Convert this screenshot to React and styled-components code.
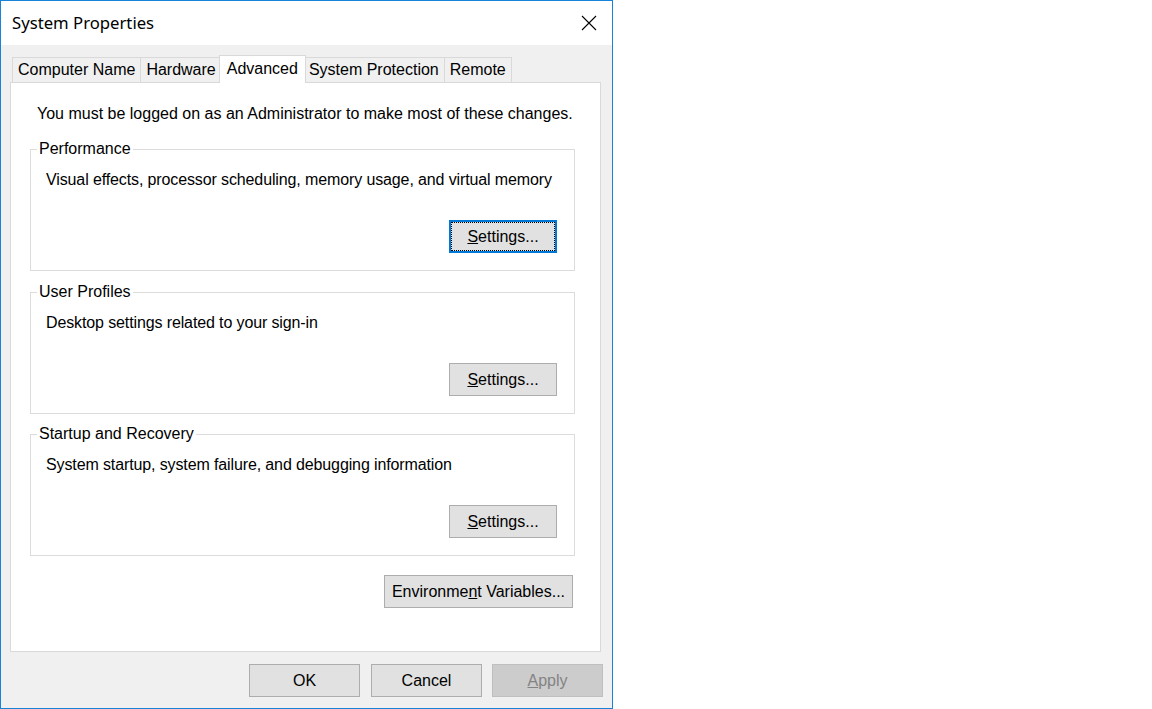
import React from "react";
import styled, { createGlobalStyle, css } from "styled-components";

const GlobalStyle = createGlobalStyle`
  html, body {
    margin: 0;
    padding: 0;
    background: #ffffff;
  }
  * {
    box-sizing: border-box;
  }
`;

const Window = styled.div`
  width: 613px;
  height: 709px;
  border: 1px solid #1883d7;
  display: flex;
  flex-direction: column;
  font-family: "Liberation Sans", Arial, sans-serif;
  font-size: 16px;
  color: #000;
`;

const TitleBar = styled.div`
  height: 44px;
  background: #ffffff;
  display: flex;
  align-items: center;
  justify-content: space-between;
  padding-left: 11px;
`;

const Title = styled.span`
  font-family: "Noto Sans", sans-serif;
  font-size: 16.7px;
  line-height: 20px;
`;

const CloseBox = styled.div`
  width: 46px;
  height: 44px;
  display: flex;
  align-items: center;
  justify-content: center;
`;

const Body = styled.div`
  flex: 1;
  background: #f0f0f0;
  padding: 10px 9px 11px 9px;
  display: flex;
  flex-direction: column;
`;

const TabStrip = styled.div`
  height: 27px;
  display: flex;
  align-items: flex-end;
  padding-left: 2px;
`;

const Tab = styled.div`
  height: 25px;
  display: flex;
  align-items: center;
  padding: 0 5px;
  margin-left: -1px;
  border: 1px solid #d9d9d9;
  border-bottom: none;
  background: #f0f0f0;
  line-height: 18px;
  white-space: nowrap;
  &:first-child {
    margin-left: 0;
  }
  ${(p) =>
    p.$active &&
    css`
      position: relative;
      z-index: 1;
      height: 28px;
      margin: 0 -2px -1px -3px;
      padding: 0 7px 2px 7px;
      background: #ffffff;
    `}
`;

const Panel = styled.div`
  height: 570px;
  margin-right: 2px;
  border: 1px solid #d9d9d9;
  background: #ffffff;
  padding: 0 25px 0 19px;
  display: flex;
  flex-direction: column;
`;

const Notice = styled.p`
  margin: 22px 0 0 7px;
  line-height: 18px;
`;

const Group = styled.fieldset`
  min-width: 0;
  margin: ${(p) => p.$gap}px 0 0 0;
  padding: 0 17px 17px 0;
  border: 1px solid #dcdcdc;
  display: flex;
  flex-direction: column;
`;

const Legend = styled.legend`
  margin-left: 6px;
  padding: 0 2px;
  line-height: 18px;
`;

const Description = styled.p`
  margin: 13px 0 0 15px;
  line-height: 18px;
  white-space: nowrap;
  letter-spacing: -0.12px;
`;

const Button = styled.button`
  height: 33px;
  width: ${(p) => p.$width}px;
  border: 1px solid #adadad;
  background: #e1e1e1;
  font-family: "Liberation Sans", Arial, sans-serif;
  font-size: 16px;
  color: #000;
  padding: 0;
  align-self: flex-end;
  ${(p) =>
    p.$focused &&
    css`
      border: 2px solid #0078d7;
      outline: 1px dotted #000;
      outline-offset: -3px;
    `}
  ${(p) =>
    p.disabled &&
    css`
      background: #cccccc;
      border-color: #bfbfbf;
      color: #838383;
    `}
`;

const GroupButton = styled(Button)`
  margin-top: 31px;
`;

const EnvButton = styled(Button)`
  margin: 19px 2px 0 0;
`;

const ButtonRow = styled.div`
  display: flex;
  justify-content: flex-end;
  gap: 10px;
  margin-top: 12px;
  & > :first-child {
    margin-right: 1px;
  }
`;

const groups = [
  {
    title: "Performance",
    text: "Visual effects, processor scheduling, memory usage, and virtual memory",
    focused: true,
    gap: 17,
  },
  { title: "User Profiles", text: "Desktop settings related to your sign-in", gap: 12 },
  {
    title: "Startup and Recovery",
    text: "System startup, system failure, and debugging information",
    gap: 11,
  },
];

const tabs = ["Computer Name", "Hardware", "Advanced", "System Protection", "Remote"];

function CloseIcon() {
  return (
    <svg width="16" height="16" viewBox="0 0 16 16">
      <path d="M1 1 L15 15 M15 1 L1 15" stroke="#000" strokeWidth="1.1" fill="none" />
    </svg>
  );
}

export default function App() {
  return (
    <>
      <GlobalStyle />
      <Window>
        <TitleBar>
          <Title>System Properties</Title>
          <CloseBox>
            <CloseIcon />
          </CloseBox>
        </TitleBar>
        <Body>
          <TabStrip>
            {tabs.map((t) => (
              <Tab key={t} $active={t === "Advanced"}>
                {t}
              </Tab>
            ))}
          </TabStrip>
          <Panel>
            <Notice>
              You must be logged on as an Administrator to make most of these changes.
            </Notice>
            {groups.map((g) => (
              <Group key={g.title} $gap={g.gap}>
                <Legend>{g.title}</Legend>
                <Description>{g.text}</Description>
                <GroupButton $width={108} $focused={g.focused}>
                  <u>S</u>ettings...
                </GroupButton>
              </Group>
            ))}
            <EnvButton $width={189}>
              Environme<u>n</u>t Variables...
            </EnvButton>
          </Panel>
          <ButtonRow>
            <Button $width={111}>OK</Button>
            <Button $width={111}>Cancel</Button>
            <Button $width={111} disabled>
              <u>A</u>pply
            </Button>
          </ButtonRow>
        </Body>
      </Window>
    </>
  );
}
